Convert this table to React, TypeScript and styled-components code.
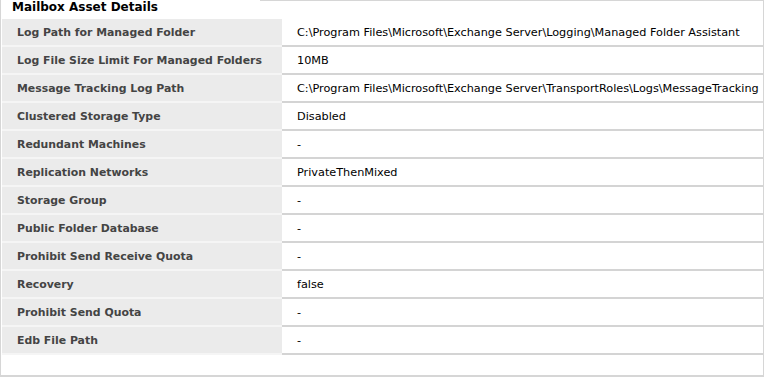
import styled, { createGlobalStyle } from "styled-components";

const GlobalStyle = createGlobalStyle`
  html, body {
    margin: 0;
    padding: 0;
    background: #fff;
  }
`;

interface DetailRow {
  label: string;
  value: string;
}

const rows: DetailRow[] = [
  { label: "Log Path for Managed Folder", value: "C:\\Program Files\\Microsoft\\Exchange Server\\Logging\\Managed Folder Assistant" },
  { label: "Log File Size Limit For Managed Folders", value: "10MB" },
  { label: "Message Tracking Log Path", value: "C:\\Program Files\\Microsoft\\Exchange Server\\TransportRoles\\Logs\\MessageTracking" },
  { label: "Clustered Storage Type", value: "Disabled" },
  { label: "Redundant Machines", value: "-" },
  { label: "Replication Networks", value: "PrivateThenMixed" },
  { label: "Storage Group", value: "-" },
  { label: "Public Folder Database", value: "-" },
  { label: "Prohibit Send Receive Quota", value: "-" },
  { label: "Recovery", value: "false" },
  { label: "Prohibit Send Quota", value: "-" },
  { label: "Edb File Path", value: "-" },
];

export default function App() {
  return (
    <>
      <GlobalStyle />
      <Panel>
        <Header>
          <Title>Mailbox Asset Details</Title>
          <HeaderRule />
        </Header>
        <Table>
          {rows.map((row) => (
            <Row key={row.label}>
              <Label>{row.label}</Label>
              <Value>{row.value}</Value>
            </Row>
          ))}
        </Table>
      </Panel>
    </>
  );
}

const Panel = styled.div`
  box-sizing: border-box;
  width: 764px;
  height: 377px;
  border-left: 1px solid #d6d6d6;
  border-right: 1px solid #d6d6d6;
  border-bottom: 2px solid #d6d6d6;
  font-family: "DejaVu Sans", Verdana, sans-serif;
`;

const Header = styled.div`
  display: flex;
  align-items: flex-start;
  height: 19px;
`;

const Title = styled.div`
  width: 248px;
  padding-left: 11px;
  color: #000;
  font-size: 12px;
  font-weight: 700;
  line-height: 14px;
`;

const HeaderRule = styled.div`
  flex: 1;
  border-top: 1px solid #d6d6d6;
`;

const Table = styled.div`
  display: flex;
  flex-direction: column;
  padding-left: 1px;
`;

const Row = styled.div`
  display: grid;
  grid-template-columns: 280px 1fr;
  height: 28px;
`;

const Label = styled.div`
  display: flex;
  align-items: center;
  padding: 1px 0 0 15px;
  background: #ebebeb;
  border-bottom: 2px solid #f5f5f5;
  color: #444;
  font-size: 10.9px;
  font-weight: 700;
  white-space: nowrap;
`;

const Value = styled.div`
  display: flex;
  align-items: center;
  padding: 1px 0 0 15px;
  border-bottom: 2px solid #d4d4d4;
  color: #000;
  font-size: 11.25px;
  white-space: nowrap;
  overflow: hidden;
`;
